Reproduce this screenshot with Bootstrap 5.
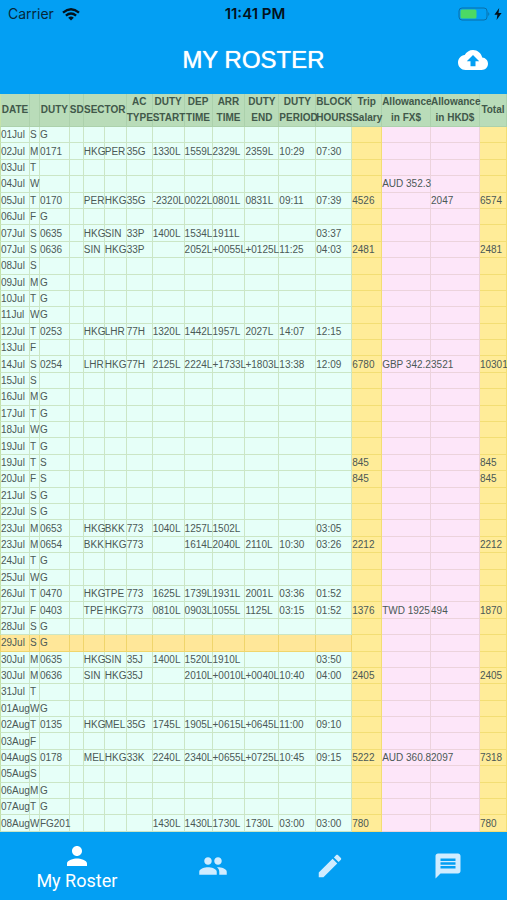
<!DOCTYPE html>
<html lang="en">
<head>
<meta charset="utf-8">
<meta name="viewport" content="width=device-width, initial-scale=1">
<title>My Roster</title>
<link href="https://cdn.jsdelivr.net/npm/bootstrap@5.3.0/dist/css/bootstrap.min.css" rel="stylesheet">
<style>
  body { font-family: "Liberation Sans", Arial, sans-serif; }
  .bar-blue { background: #039ff3; }
  .status-line { font: 14px/20px Inter, sans-serif; height: 28px; padding: 4px 5px 4px 8px; color: #06283a; }
  .status-line > * { flex: 1 1 0; }
  .clock { font-size: 15px; font-weight: 600; color: #04121c; }
  .title-line { height: 66px; display: grid; grid-template-columns: 1fr auto 1fr; padding: 0 19px 2px; }
  .title-line h1 { font-size: 24px; line-height: 30px; text-shadow: 0 0 1px #fff; grid-column: 2; }
  .icon-btn { justify-self: end; grid-column: 3; line-height: 0; }
  .roster-area { min-height: 0; }
  .roster { table-layout: fixed; border-collapse: separate; border-spacing: 0; color: #4b5956; font-size: 10px; line-height: 15px; background: #e6fff8; }
  .roster th, .roster td { padding: 0; white-space: nowrap; border: 0 solid #cbe6c6; border-width: 0 1px 1px 0; }
  .roster tr > :first-child { border-left: 1px solid #c4e2a8; }
  .roster th { height: 33px; line-height: 16px; background: #b9dcb9; border-color: #acd1ac; color: #41584a; text-align: center; }
  .roster .today td { background: #ffe799; border-color: #f0d56c; }
  .roster td.pay.pay { background: #ffec98; border-color: #f3de74; }
  .roster td.fx.fx { background: #fde6f9; border-color: #ecd3dc; }
  .tab-link { flex: 118 1 0; color: #d0ecff; text-decoration: none; }
  .tab-link.active { flex-grow: 154; color: #fff; }
  .tab-link span { font: 18px/20px Roboto, sans-serif; }
  .tabs-bottom { height: 68px; }
</style>
<script src="https://cdn.jsdelivr.net/npm/bootstrap@5.3.0/dist/js/bootstrap.bundle.min.js"></script>
</head>
<body class="vh-100 d-flex flex-column overflow-hidden">
<header class="bar-blue text-white flex-shrink-0">
  <div class="status-line d-flex align-items-center">
    <div class="d-flex align-items-center gap-2">Carrier
      <svg width="18" height="13" viewBox="0 0 18 13" fill="none" stroke="#04121c" stroke-width="2.3" aria-hidden="true"><path d="M1 4.7Q9-2.1 17 4.7M3.9 7.7Q9 3.4 14.1 7.7"/><path d="M9 12.5 6.2 9.7Q9 7.4 11.8 9.7Z" fill="#04121c" stroke="none"/></svg>
    </div>
    <div class="clock text-center">11:41 PM</div>
    <div class="d-flex align-items-center justify-content-end gap-1">
      <svg width="32" height="14" viewBox="0 0 32 14" aria-hidden="true"><rect x="1" y="1" width="28" height="12" rx="3" fill="none" stroke="#0a6fa8"/><rect x="2.5" y="2.5" width="16" height="9" rx="1.5" fill="#4cd964"/><path d="M30.3 5v4q2-2 0-4" fill="#0a6fa8"/></svg>
      <svg width="8" height="12" viewBox="0 0 8 12" fill="#04121c" aria-hidden="true"><path d="M5.2 0 .4 6.7h3L2.6 12 7.6 5H4.5z"/></svg>
    </div>
  </div>
  <div class="title-line align-items-center">
    <h1 class="m-0 fw-normal">MY ROSTER</h1>
    <button type="button" class="btn p-0 border-0 text-white icon-btn" aria-label="Upload">
      <svg width="30" height="30" viewBox="0 0 24 24" fill="currentColor"><path d="M19.35 10.04C18.67 6.59 15.64 4 12 4 9.11 4 6.6 5.64 5.35 8.04 2.34 8.36 0 10.91 0 14c0 3.31 2.69 6 6 6h13c2.76 0 5-2.24 5-5 0-2.64-2.05-4.78-4.65-4.96zM14 13v4h-4v-4H7l5-5 5 5h-3z"/></svg>
    </button>
  </div>
</header>

<main class="roster-area flex-fill overflow-hidden">
  <table class="roster w-100 h-100">
    <colgroup id="cols"></colgroup>
    <thead>
      <tr>
        <th scope="col">DATE</th><th></th><th scope="col">DUTY</th><th scope="col">SD</th><th scope="col" colspan="2">SECTOR</th>
        <th scope="col">AC<br>TYPE</th><th scope="col">DUTY<br>START</th><th scope="col">DEP<br>TIME</th><th scope="col">ARR<br>TIME</th>
        <th scope="col">DUTY<br>END</th><th scope="col">DUTY<br>PERIOD</th><th scope="col">BLOCK<br>HOURS</th><th scope="col">Trip<br>Salary</th>
        <th scope="col">Allowance<br>in FX$</th><th scope="col">Allowance<br>in HKD$</th><th scope="col">Total</th>
      </tr>
    </thead>
    <tbody id="days"></tbody>
  </table>
</main>

<nav class="bar-blue tabs-bottom d-flex flex-shrink-0" aria-label="Main">
  <a href="#roster" class="tab-link active d-flex flex-column align-items-center justify-content-center" aria-current="page">
    <svg width="30" height="30" viewBox="0 0 24 24" fill="currentColor" aria-hidden="true"><path d="M12 12c2.21 0 4-1.79 4-4s-1.79-4-4-4-4 1.79-4 4 1.79 4 4 4zm0 2c-2.67 0-8 1.34-8 4v2h16v-2c0-2.66-5.33-4-8-4z"/></svg>
    <span>My Roster</span>
  </a>
  <a href="#crew" class="tab-link d-flex align-items-center justify-content-center" aria-label="Crew">
    <svg width="30" height="30" viewBox="0 0 24 24" fill="currentColor"><path d="M16 11c1.66 0 2.99-1.34 2.99-3S17.66 5 16 5c-1.66 0-3 1.34-3 3s1.34 3 3 3zm-8 0c1.66 0 2.99-1.34 2.99-3S9.66 5 8 5C6.34 5 5 6.34 5 8s1.34 3 3 3zm0 2c-2.33 0-7 1.17-7 3.5V19h14v-2.5c0-2.33-4.67-3.5-7-3.5zm8 0c-.29 0-.62.02-.97.05 1.16.84 1.97 1.97 1.97 3.45V19h6v-2.5c0-2.33-4.67-3.5-7-3.5z"/></svg>
  </a>
  <a href="#edit" class="tab-link d-flex align-items-center justify-content-center" aria-label="Edit">
    <svg width="30" height="30" viewBox="0 0 24 24" fill="currentColor"><path d="M3 17.25V21h3.75L17.81 9.94l-3.75-3.75L3 17.25zM20.71 7.04c.39-.39.39-1.02 0-1.41l-2.34-2.34c-.39-.39-1.02-.39-1.41 0l-1.83 1.83 3.75 3.75 1.83-1.83z"/></svg>
  </a>
  <a href="#chat" class="tab-link d-flex align-items-center justify-content-center" aria-label="Messages">
    <svg width="30" height="30" viewBox="0 0 24 24" fill="currentColor"><path d="M20 2H4c-1.1 0-1.99.9-1.99 2L2 22l4-4h14c1.1 0 2-.9 2-2V4c0-1.1-.9-2-2-2zm-2 12H6v-2h12v2zm0-3H6V9h12v2zm0-3H6V6h12v2z"/></svg>
  </a>
</nav>

<script>
// Relative column widths; the fixed table scales them to the window.
const widths = [30, 10, 30, 14, 21, 22, 26, 32, 28, 33, 34, 37, 36, 30, 49, 49, 27];
const total = widths.reduce((a, b) => a + b, 0);
for (const w of widths) {
  const col = document.createElement('col');
  col.style.width = (w / total * 100) + '%';
  document.getElementById('cols').append(col);
}
// date|weekday|duty|sd|from|to|aircraft|start|dep|arr|end|period|block|salary|fx|hkd|total
const rows = `01Jul|S|G
02Jul|M|0171||HKG|PER|35G|1330L|1559L|2329L|2359L|10:29|07:30
03Jul|T
04Jul|W|||||||||||||AUD 352.3
05Jul|T|0170||PER|HKG|35G|-2320L|0022L|0801L|0831L|09:11|07:39|4526||2047|6574
06Jul|F|G
07Jul|S|0635||HKG|SIN|33P|1400L|1534L|1911L|||03:37
07Jul|S|0636||SIN|HKG|33P||2052L|+0055L|+0125L|11:25|04:03|2481|||2481
08Jul|S
09Jul|M|G
10Jul|T|G
11Jul|W|G
12Jul|T|0253||HKG|LHR|77H|1320L|1442L|1957L|2027L|14:07|12:15
13Jul|F
14Jul|S|0254||LHR|HKG|77H|2125L|2224L|+1733L|+1803L|13:38|12:09|6780|GBP 342.2|3521|10301
15Jul|S
16Jul|M|G
17Jul|T|G
18Jul|W|G
19Jul|T|G
19Jul|T|S|||||||||||845|||845
20Jul|F|S|||||||||||845|||845
21Jul|S|G
22Jul|S|G
23Jul|M|0653||HKG|BKK|773|1040L|1257L|1502L|||03:05
23Jul|M|0654||BKK|HKG|773||1614L|2040L|2110L|10:30|03:26|2212|||2212
24Jul|T|G
25Jul|W|G
26Jul|T|0470||HKG|TPE|773|1625L|1739L|1931L|2001L|03:36|01:52
27Jul|F|0403||TPE|HKG|773|0810L|0903L|1055L|1125L|03:15|01:52|1376|TWD 1925|494|1870
28Jul|S|G
29Jul|S|G
30Jul|M|0635||HKG|SIN|35J|1400L|1520L|1910L|||03:50
30Jul|M|0636||SIN|HKG|35J||2010L|+0010L|+0040L|10:40|04:00|2405|||2405
31Jul|T
01Aug|W|G
02Aug|T|0135||HKG|MEL|35G|1745L|1905L|+0615L|+0645L|11:00|09:10
03Aug|F
04Aug|S|0178||MEL|HKG|33K|2240L|2340L|+0655L|+0725L|10:45|09:15|5222|AUD 360.8|2097|7318
05Aug|S
06Aug|M|G
07Aug|T|G
08Aug|W|FG201|||||1430L|1430L|1730L|1730L|03:00|03:00|780|||780`;
for (const line of rows.split('\n')) {
  const cells = line.split('|');
  const tr = document.createElement('tr');
  if (cells[0] === '29Jul') tr.className = 'today';
  for (let i = 0; i < 17; i++) {
    const td = document.createElement('td');
    td.textContent = cells[i] || '';
    if (i === 13 || i === 16) td.className = 'pay';
    if (i === 14 || i === 15) td.className = 'fx';
    tr.append(td);
  }
  document.getElementById('days').append(tr);
}
</script>
</body>
</html>
